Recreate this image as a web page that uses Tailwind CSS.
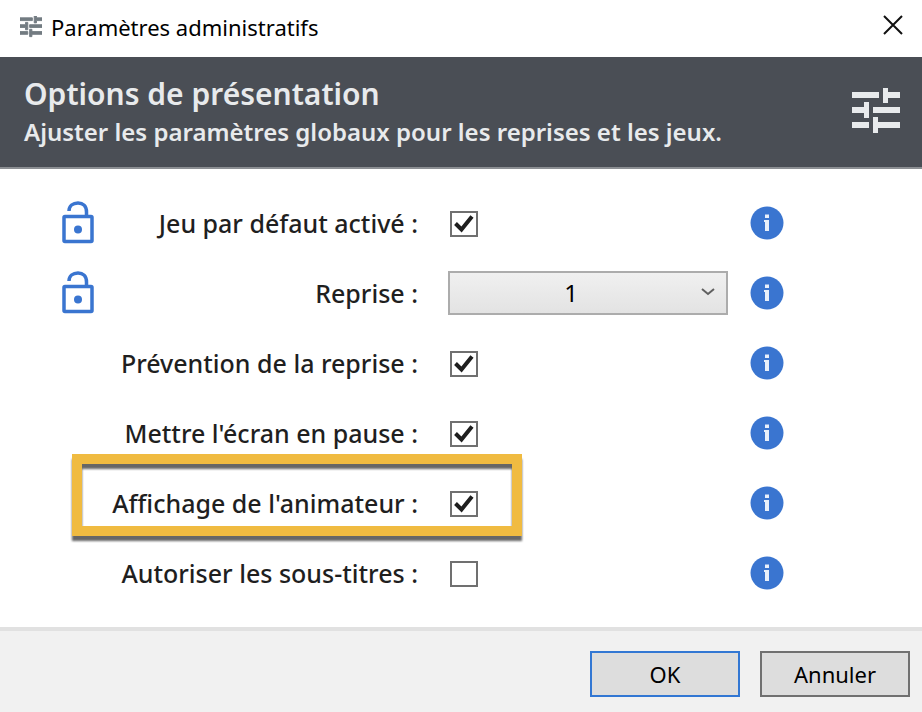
<!DOCTYPE html>
<html lang="fr">

<head>
	<meta charset="utf-8" />
	<meta name="viewport" content="width=device-width, initial-scale=1" />
	<title>Paramètres administratifs</title>
	<script src="https://cdn.jsdelivr.net/npm/@tailwindcss/browser@4"></script>
</head>

<body class="min-h-screen flex flex-col bg-white text-[#1f1f1f] font-['Noto_Sans','Open_Sans',sans-serif]">
	<!-- shared icons -->
	<svg class="hidden">
		<symbol id="tune" viewBox="0 0 48 48">
			<path fill="currentColor" d="M0 4h27v6H0zM31 0h5v4h12v6H36v5h-5zM0 19h12v-5h5v16h-5v-5H0zM21 19h27v6H21zM0 34h17v6H0zM21 29h5v5h22v6H26v5h-5z" />
		</symbol>
		<symbol id="unlock" viewBox="0 0 34 44">
			<rect x="3" y="15.500" width="28" height="25" rx="1" fill="none" stroke="currentColor" stroke-width="3.500" />
			<path d="M8 10C8 5 12 2 17 2s8.500 3 8.500 9v4" fill="none" stroke="currentColor" stroke-width="3.500" />
			<circle cx="17" cy="28.500" r="4" fill="currentColor" />
		</symbol>
		<symbol id="info" viewBox="0 0 34 34">
			<circle cx="17" cy="17" r="16.500" fill="currentColor" />
			<path fill="#e9f0fa" d="M15 8.500h4v3.500h-4zM14 14h5v11h-4v-9h-1z" />
		</symbol>
		<symbol id="check" viewBox="0 0 28 26">
			<path d="M5.500 12.500l6 6L22 5.500" fill="none" stroke="#1f1f1f" stroke-width="4" />
		</symbol>
	</svg>

	<div class="h-[57px] pl-5 pr-[18px] flex items-center">
		<svg class="w-[22px] h-[22px] mb-1 text-[#737c82]"><use href="#tune" stroke="currentColor" stroke-width="2" /></svg>
		<h1 class="flex-1 ml-[9px] pb-1 text-[22px] leading-8 text-black">Paramètres administratifs</h1>
		<button type="button" aria-label="Fermer" class="mb-2">
			<svg class="w-[22px] h-[22px]" viewBox="0 0 22 22"><path d="M2 2l18 18M20 2L2 20" stroke="#111" stroke-width="2" /></svg>
		</button>
	</div>

	<header class="h-28 pl-6 pr-[22px] flex items-center bg-[#4a4e55] border-b-2 border-[#8c8f93] text-[#e8eaec]">
		<div class="flex-1">
			<h2 class="text-[30px] leading-10 font-semibold">Options de présentation</h2>
			<p class="text-2xl leading-9 font-semibold">Ajuster les paramètres globaux pour les reprises et les jeux.</p>
		</div>
		<svg class="w-12 h-12"><use href="#tune" /></svg>
	</header>

	<form id="options" class="flex-1 py-[19px] pl-[61px] text-[25px] font-medium">
		<div class="h-[70px] flex items-center">
			<svg class="w-[34px] h-[44px] text-[#3a75d0]"><use href="#unlock" /></svg>
			<label for="defaut" class="w-[323px] pt-[2px] text-right">Jeu par défaut activé :</label>
			<div class="w-[280px] ml-[30px] pl-[2px] pt-[2px]">
				<span class="relative block w-7">
					<input id="defaut" type="checkbox" checked class="peer block appearance-none w-7 h-[26px] bg-white border-2 border-[#707070]" />
					<svg class="hidden peer-checked:block absolute inset-0 w-7 h-[26px] pointer-events-none"><use href="#check" /></svg>
				</span>
			</div>
			<button type="button" aria-label="Info" class="ml-[22px] text-[#3a75d0]"><svg class="w-[34px] h-[34px]"><use href="#info" /></svg></button>
		</div>

		<div class="h-[70px] flex items-center">
			<svg class="w-[34px] h-[44px] text-[#3a75d0]"><use href="#unlock" /></svg>
			<label for="reprise" class="w-[323px] pt-[2px] text-right">Reprise :</label>
			<div class="relative w-[280px] ml-[30px]">
				<select id="reprise" class="block appearance-none w-full h-11 pr-[34px] border-2 border-[#acacac] bg-linear-to-b from-[#f0f0f0] to-[#e3e3e3] text-2xl font-normal text-black [text-align-last:center]">
					<option>1</option>
					<option>2</option>
					<option>3</option>
				</select>
				<svg class="absolute right-3 top-4 w-4 h-3 pointer-events-none" viewBox="0 0 16 12"><path d="M2 2l6 5 6-5" fill="none" stroke="#606060" stroke-width="2" /></svg>
			</div>
			<button type="button" aria-label="Info" class="ml-[22px] text-[#3a75d0]"><svg class="w-[34px] h-[34px]"><use href="#info" /></svg></button>
		</div>

		<div class="h-[70px] flex items-center">
			<label for="prevention" class="w-[357px] pt-[2px] text-right">Prévention de la reprise :</label>
			<div class="w-[280px] ml-[30px] pl-[2px] pt-[2px]">
				<span class="relative block w-7">
					<input id="prevention" type="checkbox" checked class="peer block appearance-none w-7 h-[26px] bg-white border-2 border-[#707070]" />
					<svg class="hidden peer-checked:block absolute inset-0 w-7 h-[26px] pointer-events-none"><use href="#check" /></svg>
				</span>
			</div>
			<button type="button" aria-label="Info" class="ml-[22px] text-[#3a75d0]"><svg class="w-[34px] h-[34px]"><use href="#info" /></svg></button>
		</div>

		<div class="h-[70px] flex items-center">
			<label for="pause" class="w-[357px] pt-[2px] text-right">Mettre l'écran en pause :</label>
			<div class="w-[280px] ml-[30px] pl-[2px] pt-[2px]">
				<span class="relative block w-7">
					<input id="pause" type="checkbox" checked class="peer block appearance-none w-7 h-[26px] bg-white border-2 border-[#707070]" />
					<svg class="hidden peer-checked:block absolute inset-0 w-7 h-[26px] pointer-events-none"><use href="#check" /></svg>
				</span>
			</div>
			<button type="button" aria-label="Info" class="ml-[22px] text-[#3a75d0]"><svg class="w-[34px] h-[34px]"><use href="#info" /></svg></button>
		</div>

		<div class="relative h-[70px] flex items-center">
			<label for="animateur" class="w-[357px] pt-[2px] text-right">Affichage de l'animateur :</label>
			<div class="w-[280px] ml-[30px] pl-[2px] pt-[2px]">
				<span class="relative block w-7">
					<input id="animateur" type="checkbox" checked class="peer block appearance-none w-7 h-[26px] bg-white border-2 border-[#707070]" />
					<svg class="hidden peer-checked:block absolute inset-0 w-7 h-[26px] pointer-events-none"><use href="#check" /></svg>
				</span>
			</div>
			<button type="button" aria-label="Info" class="ml-[22px] text-[#3a75d0]"><svg class="w-[34px] h-[34px]"><use href="#info" /></svg></button>
			<!-- highlight frame -->
			<div class="absolute left-[11px] -top-[14px] w-[450px] h-[82px] border-10 border-[#f0bb41] drop-shadow-[0_5px_1px_rgba(0,0,0,0.6)] pointer-events-none"></div>
		</div>

		<div class="h-[70px] flex items-center">
			<label for="soustitres" class="w-[357px] pt-[2px] text-right">Autoriser les sous-titres :</label>
			<div class="w-[280px] ml-[30px] pl-[2px] pt-[2px]">
				<span class="relative block w-7">
					<input id="soustitres" type="checkbox" class="peer block appearance-none w-7 h-[26px] bg-white border-2 border-[#707070]" />
					<svg class="hidden peer-checked:block absolute inset-0 w-7 h-[26px] pointer-events-none"><use href="#check" /></svg>
				</span>
			</div>
			<button type="button" aria-label="Info" class="ml-[22px] text-[#3a75d0]"><svg class="w-[34px] h-[34px]"><use href="#info" /></svg></button>
		</div>
	</form>

	<footer class="pt-5 pb-[15px] pr-3 flex justify-end gap-5 bg-[#f1f1f1] border-t-4 border-[#e1e1e1] text-[22px] text-black">
		<button type="submit" form="options" class="w-[150px] h-[46px] bg-[#dddddd] border-2 border-[#3277d3]">OK</button>
		<button type="button" class="w-[150px] h-[46px] bg-[#dddddd] border-2 border-[#707070]">Annuler</button>
	</footer>
</body>

</html>
